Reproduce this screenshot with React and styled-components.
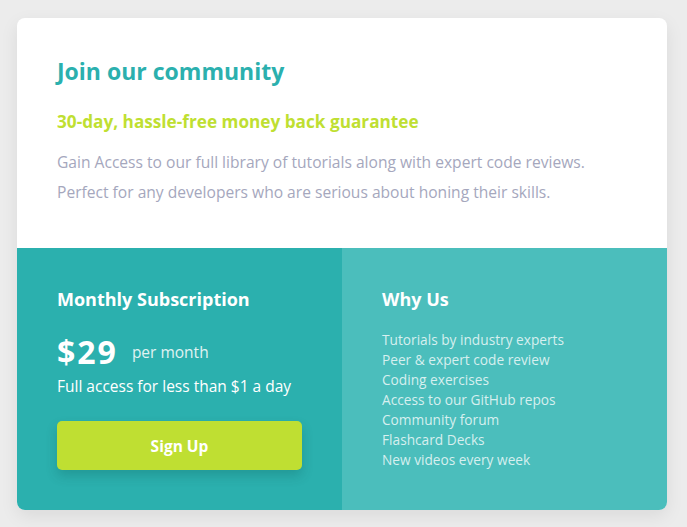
import React from "react";
import styled, { createGlobalStyle } from "styled-components";

const Global = createGlobalStyle`
  html, body { margin: 0; padding: 0; }
  body { background: #ececec; font-family: "Open Sans", Lato, sans-serif; }
  * { box-sizing: border-box; }
`;

const Page = styled.div`
  padding: 18px 20px 17px 17px;
`;

const Card = styled.div`
  width: 650px;
  border-radius: 8px;
  overflow: hidden;
  background: #fff;
  box-shadow: 0 6px 18px rgba(0, 0, 0, 0.08);
`;

const Top = styled.section`
  padding: 38px 40px 42px;
  height: 230px;
`;

const Title = styled.h1`
  margin: 0;
  font-size: 23px;
  font-weight: 700;
  color: #2bb0ae;
  line-height: 30px;
`;

const Guarantee = styled.h2`
  margin: 24px 0 13px;
  font-size: 17.2px;
  font-weight: 700;
  color: #bfdf32;
  line-height: 24px;
`;

const Text = styled.p`
  margin: 0;
  font-size: 15.6px;
  line-height: 30px;
  color: #a5a7bd;
`;

const Bottom = styled.div`
  display: grid;
  grid-template-columns: 1fr 1fr;
  height: 262px;
`;

const Half = styled.section`
  background: ${(p) => p.$bg};
  padding: 38px 40px 40px;
  color: #fff;
`;

const SubTitle = styled.h3`
  margin: 0;
  font-size: 18px;
  font-weight: 700;
  line-height: 26px;
`;

const PriceRow = styled.div`
  display: flex;
  align-items: center;
  gap: 14px;
  margin-top: 22px;
`;

const Price = styled.span`
  font-size: 32px;
  font-weight: 700;
  letter-spacing: 2px;
  line-height: 36px;
`;

const Per = styled.span`
  font-size: 15.5px;
  opacity: 0.85;
`;

const Access = styled.p`
  margin: 5px 0 0;
  font-size: 15.5px;
  line-height: 22px;
`;

const Button = styled.button`
  margin-top: 24px;
  width: 245px;
  height: 49px;
  border: none;
  border-radius: 5px;
  background: #bfdf32;
  color: #fff;
  font-family: inherit;
  font-size: 15.5px;
  font-weight: 700;
  box-shadow: 0 6px 12px rgba(0, 60, 60, 0.2);
  cursor: pointer;
`;

const List = styled.ul`
  list-style: none;
  margin: 18px 0 0;
  padding: 0;
`;

const Item = styled.li`
  font-size: 13.7px;
  line-height: 20px;
  color: rgba(255, 255, 255, 0.78);
`;

const items = [
  "Tutorials by industry experts",
  "Peer & expert code review",
  "Coding exercises",
  "Access to our GitHub repos",
  "Community forum",
  "Flashcard Decks",
  "New videos every week",
];

export default function App() {
  return (
    <>
      <Global />
      <Page>
        <Card>
          <Top>
            <Title>Join our community</Title>
            <Guarantee>30-day, hassle-free money back guarantee</Guarantee>
            <Text>Gain Access to our full library of tutorials along with expert code reviews.</Text>
            <Text>Perfect for any developers who are serious about honing their skills.</Text>
          </Top>
          <Bottom>
            <Half $bg="#2bb0ae">
              <SubTitle>Monthly Subscription</SubTitle>
              <PriceRow>
                <Price>$29</Price>
                <Per>per month</Per>
              </PriceRow>
              <Access>Full access for less than $1 a day</Access>
              <Button>Sign Up</Button>
            </Half>
            <Half $bg="#4bbebc">
              <SubTitle>Why Us</SubTitle>
              <List>
                {items.map((t) => (
                  <Item key={t}>{t}</Item>
                ))}
              </List>
            </Half>
          </Bottom>
        </Card>
      </Page>
    </>
  );
}
